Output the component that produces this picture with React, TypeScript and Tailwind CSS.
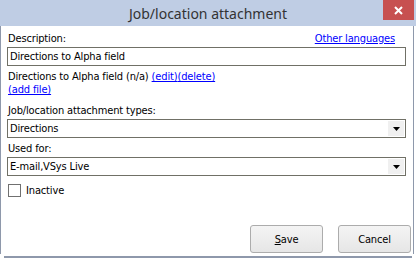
import React from "react";

const body = { fontFamily: '"DejaVu Sans Condensed", "DejaVu Sans", sans-serif' };

function Select({ value }: { value: string }) {
  return (
    <div className="flex h-[19px] items-center border border-[#707066] bg-white pl-[2px] pr-px">
      <span className="flex-1 text-[11px] leading-[13px] text-black">{value}</span>
      <div className="flex h-[15px] w-[16px] items-center justify-center bg-[#f0f0f0]">
        <svg width="7" height="4" viewBox="0 0 7 4">
          <path d="M0 0H7L3.5 4Z" fill="#000" />
        </svg>
      </div>
    </div>
  );
}

export default function App() {
  return (
    <div className="relative h-[258px] w-[416px] overflow-hidden bg-white tracking-[-0.15px]" style={body}>
      <div className="flex h-[26px] w-[416px] items-center justify-center bg-[#bfcde4]">
        <span
          className="text-[14px] tracking-normal text-[#333333]"
          style={{ fontFamily: '"Noto Sans", "Open Sans", sans-serif' }}
        >
          Job/location attachment
        </span>
      </div>
      <div className="absolute right-[2px] top-0 flex h-[20px] w-[31px] items-center justify-center bg-[#c75050]">
        <svg width="9" height="9" viewBox="0 0 9 9">
          <path d="M1 1L8 8M8 1L1 8" stroke="#fff" strokeWidth="2" />
        </svg>
      </div>
      <div className="flex h-[228px] w-[414px] flex-col border-x border-[#8e98ab] bg-white pl-[6px] pr-[7px] pt-[6px] text-[11px] leading-[13px] text-black">
        <div className="flex justify-between">
          <span className="pl-px">Description:</span>
          <a className="mr-[11px] text-[#0000ff] underline">Other languages</a>
        </div>
        <div className="mt-[2px] flex h-[19px] items-center border border-[#707066] pl-[2px]">
          Directions to Alpha field
        </div>
        <div className="mt-[4px] pl-px">
          Directions to Alpha field (n/a){" "}
          <a className="text-[#0000ff] underline">(edit)</a>
          <a className="text-[#0000ff] underline">(delete)</a>
        </div>
        <div className="pl-px">
          <a className="text-[#0000ff] underline">(add file)</a>
        </div>
        <div className="mt-[8px] pl-px">Job/location attachment types:</div>
        <div className="mt-[2px]">
          <Select value="Directions" />
        </div>
        <div className="mt-[4px] pl-px">Used for:</div>
        <div className="mt-[2px]">
          <Select value="E-mail,VSys Live" />
        </div>
        <div className="mt-[8px] flex items-center gap-[5px] pl-px">
          <div className="h-[13px] w-[13px] border border-[#707070] bg-white" />
          <span>Inactive</span>
        </div>
        <div className="mt-auto mb-[1px] mr-[-5px] flex justify-end gap-[15px]">
          <button className="flex h-[28px] w-[73px] items-center justify-center rounded-[3px] border border-[#acacac] bg-gradient-to-b from-[#f4f4f4] to-[#e6e6e6] text-[11px]">
            <span>
              <span className="underline">S</span>ave
            </span>
          </button>
          <button className="flex h-[28px] w-[73px] items-center justify-center rounded-[3px] border border-[#acacac] bg-gradient-to-b from-[#f4f4f4] to-[#e6e6e6] text-[11px]">
            Cancel
          </button>
        </div>
      </div>
      <div className="ml-[4px] mt-[2px] h-[2px] w-[408px] bg-[#8e98ab]" />
    </div>
  );
}
